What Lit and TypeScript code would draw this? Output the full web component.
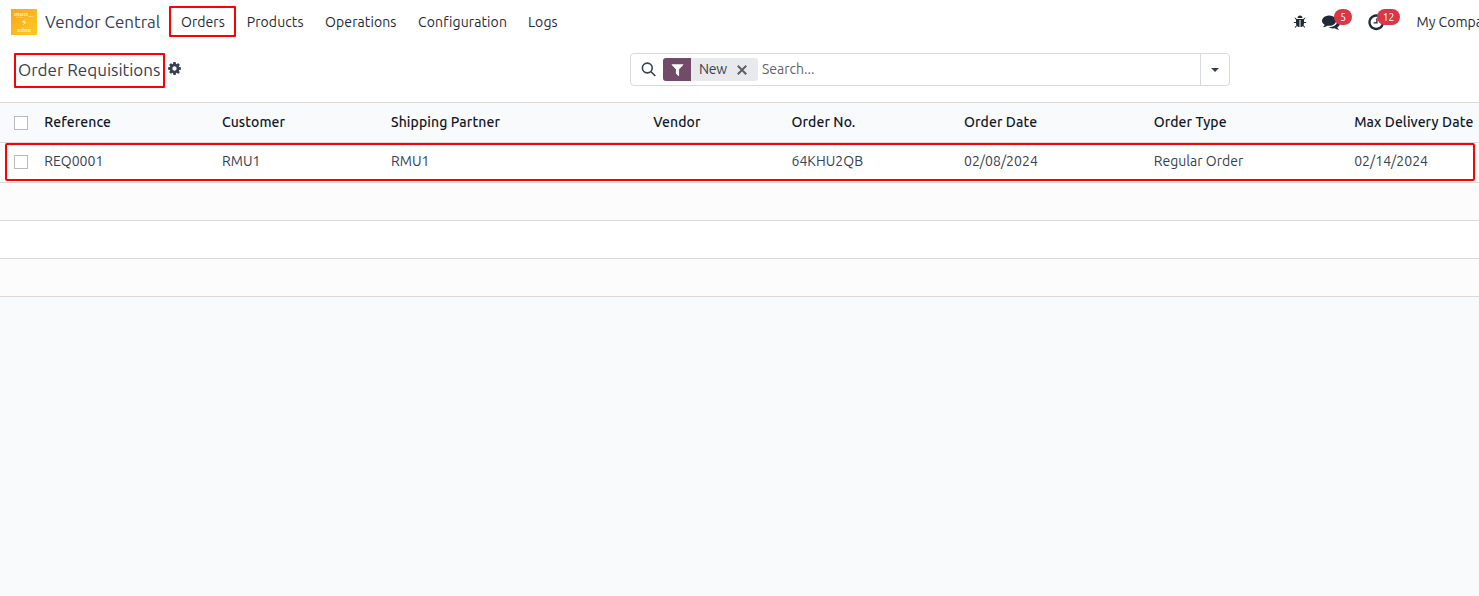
import { LitElement, html, css, svg } from 'lit';
import { customElement } from 'lit/decorators.js';

const BUG = 'M1696 960q0 26-19 45t-45 19h-224q0 171-67 290l208 209q19 19 19 45t-19 45q-18 19-45 19t-45-19l-198-197q-5 5-15 13t-42 28.5-65 36.5-82 29-97 13v-896h-128v896q-51 0-101.5-13.5t-87-33-66-39-43.5-32.5l-15-14-183 207q-20 21-48 21-24 0-43-16-19-18-20.5-44.5t15.5-46.5l202-227q-58-114-58-274h-224q-26 0-45-19t-19-45 19-45 45-19h224v-294l-173-173q-19-19-19-45t19-45 45-19 45 19l173 173h844l173-173q19-19 45-19t45 19 19 45-19 45l-173 173v294h224q26 0 45 19t19 45zm-480-576h-640q0-133 93.5-226.5t226.5-93.5 226.5 93.5 93.5 226.5z';
const COMMENTS = 'M1408 768q0 139-94 257t-256.5 186.5-353.5 68.5q-86 0-176-16-124 88-278 128-36 9-86 16h-3q-11 0-20.5-8t-11.5-21q-1-3-1-6.5t.5-6.5 2-6l2.5-5 3.5-5.5 4-5 4.5-5 4-4.5q5-6 23-25t26-29.5 22.5-29 25-38.5 20.5-44q-124-72-195-177t-71-224q0-139 94-257t256.5-186.5 353.5-68.5 353.5 68.5 256.5 186.5 94 257zm384 256q0 120-71 224.5t-195 176.5q10 24 20.5 44t25 38.5 22.5 29 26 29.5 23 25q1 1 4 4.5t4.5 5 4 5 3.5 5.5l2.5 5 2 6 .5 6.5-1 6.5q-3 14-13 22t-22 7q-50-7-86-16-154-40-278-128-90 16-176 16-271 0-472-132 58 4 88 4 161 0 309-45t264-129q125-92 192-212t67-254q0-77-23-152 129 71 204 178t75 230z';
const CLOCK = 'M1024 544v448q0 14-9 23t-23 9h-320q-14 0-23-9t-9-23v-64q0-14 9-23t23-9h224v-352q0-14 9-23t23-9h64q14 0 23 9t9 23zm416 352q0-148-73-273t-198-198-273-73-273 73-198 198-73 273 73 273 198 198 273 73 273-73 198-198 73-273zm224 0q0 209-103 385.5t-279.5 279.5-385.5 103-385.5-103-279.5-279.5-103-385.5 103-385.5 279.5-279.5 385.5-103 385.5 103 279.5 279.5 103 385.5z';
const COG = 'M1152 896q0-106-75-181t-181-75-181 75-75 181 75 181 181 75 181-75 75-181zm512-109v222q0 12-8 23t-20 13l-185 28q-19 54-39 91 35 50 107 138 10 12 10 25t-9 23q-27 37-99 108t-94 71q-12 0-26-9l-138-108q-44 23-91 38-16 136-29 186-7 28-36 28h-222q-14 0-24.5-8.5t-11.5-21.5l-28-184q-49-16-90-37l-141 107q-10 9-25 9-14 0-25-11-126-114-165-168-7-10-7-23 0-12 8-23 15-21 51-66.5t54-70.5q-27-50-41-99l-183-27q-13-2-21-12.5t-8-23.5v-222q0-12 8-23t19-13l186-28q14-46 39-92-40-57-107-138-10-12-10-24 0-10 9-23 26-36 98.5-107.5t94.5-71.5q13 0 26 10l138 107q44-23 91-38 16-136 29-186 7-28 36-28h222q14 0 24.5 8.5t11.5 21.5l28 184q49 16 90 37l142-107q9-9 24-9 13 0 25 10 129 119 165 170 7 8 7 22 0 12-8 23-15 21-51 66.5t-54 70.5q26 50 41 98l183 28q13 2 21 12.5t8 23.5z';
const FILTER = 'M1595 295q17 41-14 70l-493 493v742q0 42-39 59-13 5-25 5-27 0-45-19l-256-256q-19-19-19-45v-486l-493-493q-31-29-14-70 17-39 59-39h1280q42 0 59 39z';

const icon = (d: string, cls: string) =>
  html`<svg class=${cls} viewBox="0 0 1792 1792" fill="currentColor">${svg`<path d=${d} />`}</svg>`;

const COLUMNS = ['Reference', 'Customer', 'Shipping Partner', 'Vendor', 'Order No.', 'Order Date', 'Order Type', 'Max Delivery Date'];
const ROW = ['REQ0001', 'RMU1', 'RMU1', '', '64KHU2QB', '02/08/2024', 'Regular Order', '02/14/2024'];

@customElement('app-root')
export class AppRoot extends LitElement {
  static styles = css`
    :host {
      display: flex;
      flex-direction: column;
      height: 596px;
      overflow: hidden;
      background: #f9fafb;
      color: #374151;
      font: 14px/20px Ubuntu, 'Noto Sans', sans-serif;
      white-space: nowrap;
    }
    * { box-sizing: border-box; }
    svg { display: block; flex: none; }
    .navbar {
      display: flex;
      height: 46px;
      flex: none;
      padding: 0 0 2px 11px;
      align-items: center;
      background: #fff;
      color: #1f2937;
      overflow: hidden;
    }
    .logo { width: 26px; height: 26px; }
    .brand { width: 124px; padding-left: 8px; font-size: 17px; color: #374151; }
    .menu { display: flex; margin-left: 8px; align-items: center; letter-spacing: 0.1px; }
    .item { padding-left: 10.7px; }
    .item.products { width: 78.4px; }
    .item.operations { width: 93px; }
    .item.configuration { width: 109.8px; }
    .item.orders {
      width: 67px;
      height: 31px;
      margin-bottom: 1px;
      padding: 4px 0 0 10px;
      border: 2px solid #ff0000;
      border-radius: 1px;
      letter-spacing: 0.05px;
    }
    .tray { display: flex; margin-left: auto; flex: none; width: 186px; align-items: center; }
    .bug { width: 14px; height: 14px; }
    .slot { position: relative; flex: none; }
    .chat { margin-left: 15px; width: 44.5px; }
    .activity { width: 50px; }
    .comments { width: 18px; height: 18px; }
    .clock { width: 18.5px; height: 18.5px; }
    .badge {
      position: absolute;
      left: 12px;
      top: -4px;
      height: 16px;
      min-width: 18px;
      padding: 0 6px;
      border-radius: 8px;
      background: #dc3545;
      color: #fff;
      font-size: 10.2px;
      line-height: 16px;
      text-align: center;
    }
    .badge.wide { left: 10.5px; min-width: 23px; padding: 0 5px; }
    .panel { display: flex; height: 56px; flex: none; background: #fff; padding: 7px 0 0 14px; align-items: flex-start; }
    .title {
      width: 151px;
      height: 35px;
      padding: 2px 0 0 2px;
      border: 2px solid #ff0000;
      border-radius: 1px;
      font-size: 17px;
      line-height: 26px;
    }
    .cog { width: 15px; height: 15px; margin: 8px 0 0 2px; }
    .search {
      display: flex;
      width: 600px;
      height: 33px;
      margin-left: 448px;
      border: 1px solid #d8dadd;
      border-radius: 4px;
      align-items: center;
    }
    .glass { width: 15px; height: 15px; margin: 0 7.5px 0 9.5px; }
    .facet { display: flex; width: 95px; height: 23px; border-radius: 3px; overflow: hidden; background: #e7e9ed; align-items: center; }
    .funnelbox { display: flex; width: 28px; height: 23px; background: #714b67; color: #fff; align-items: center; justify-content: center; }
    .funnel { width: 15px; height: 15px; }
    .facetname { width: 46px; padding: 0 0 1px 8px; letter-spacing: -0.2px; }
    .cross { width: 10px; height: 10px; }
    .input { flex: 1; padding: 0 0 2px 4px; color: #5f636f; }
    .toggle { display: flex; width: 29px; height: 31px; border-left: 1px solid #d8dadd; align-items: center; justify-content: center; }
    .caret { width: 8px; height: 4px; }
    .row {
      display: grid;
      grid-template-columns: 30.3px 177.7px 169px 262.3px 138.2px 172.5px 189.7px 200.5px 1fr;
      align-items: center;
      height: 38px;
      flex: none;
      border-bottom: 1px solid #d8dadd;
      background: #fff;
    }
    .head {
      height: 41px;
      padding: 0 0 2px 14px;
      border-top: 1px solid #d8dadd;
      background: #f9fafb;
      color: #111827;
      font-weight: 500;
      letter-spacing: 0.1px;
    }
    .record { display: block; height: 40px; padding: 0 4px 0 5px; }
    .record .marked {
      display: grid;
      grid-template-columns: inherit;
      align-items: center;
      height: 38px;
      padding-left: 7px;
      padding-bottom: 2px;
      border: 2px solid #ff0000;
      border-radius: 2px;
      letter-spacing: 0.04px;
    }
    .odd { background: #fcfcfc; }
    .check { width: 14px; height: 14px; margin-top: 2px; border: 1px solid #b8bbbf; background: #fff; }
  `;

  render() {
    return html`
      <div class="navbar">
        <svg class="logo" viewBox="0 0 26 26">
          <defs><linearGradient id="g" x2="1" y2="1"><stop stop-color="#f9a51c" /><stop offset="1" stop-color="#fccb20" /></linearGradient></defs>
          <rect width="26" height="26" fill="url(#g)" />
          <text x="3" y="7" font-size="5" font-weight="700" fill="#fff" fill-opacity=".8" textLength="14" lengthAdjust="spacingAndGlyphs">amazon</text>
          <path d="M5 8.2h7M17 7.5h6" stroke="#fff" stroke-opacity=".5" stroke-width=".7" />
          <path d="M14 10.5l-2 2 3 1-3 2M11 13h4" fill="none" stroke="#fff" stroke-opacity=".7" />
          <text x="6" y="23" font-size="6" font-weight="700" fill="#fff" fill-opacity=".75" textLength="14" lengthAdjust="spacingAndGlyphs">odoo</text>
        </svg>
        <div class="brand">Vendor Central</div>
        <div class="menu">
          <div class="item orders">Orders</div>
          <div class="item products">Products</div>
          <div class="item operations">Operations</div>
          <div class="item configuration">Configuration</div>
          <div class="item">Logs</div>
        </div>
        <div class="tray">
          ${icon(BUG, 'bug')}
          <div class="slot chat">${icon(COMMENTS, 'comments')}<span class="badge">5</span></div>
          <div class="slot activity">${icon(CLOCK, 'clock')}<span class="badge wide">12</span></div>
          <div>My Company</div>
        </div>
      </div>
      <div class="panel">
        <div class="title">Order Requisitions</div>
        ${icon(COG, 'cog')}
        <div class="search">
          <svg class="glass" viewBox="0 0 15 15" fill="none" stroke="#374151" stroke-width="1.6"><circle cx="6.3" cy="6" r="4.9" /><path d="M9.8 9.5l4.5 4.5" /></svg>
          <div class="facet">
            <div class="funnelbox">${icon(FILTER, 'funnel')}</div>
            <div class="facetname">New</div>
            <svg class="cross" viewBox="0 0 10 10" stroke="#5a606b" stroke-width="2"><path d="M.8.8l8.4 8.4M9.2.8L.8 9.2" /></svg>
          </div>
          <div class="input">Search...</div>
          <div class="toggle"><svg class="caret" viewBox="0 0 8 4"><path d="M0 0h8L4 4z" fill="#374151" /></svg></div>
        </div>
      </div>
      <div class="row head"><span class="check"></span>${COLUMNS.map((c) => html`<span>${c}</span>`)}</div>
      <div class="row record"><div class="marked"><span class="check"></span>${ROW.map((c) => html`<span>${c}</span>`)}</div></div>
      <div class="row odd"></div>
      <div class="row"></div>
      <div class="row odd"></div>
    `;
  }
}
